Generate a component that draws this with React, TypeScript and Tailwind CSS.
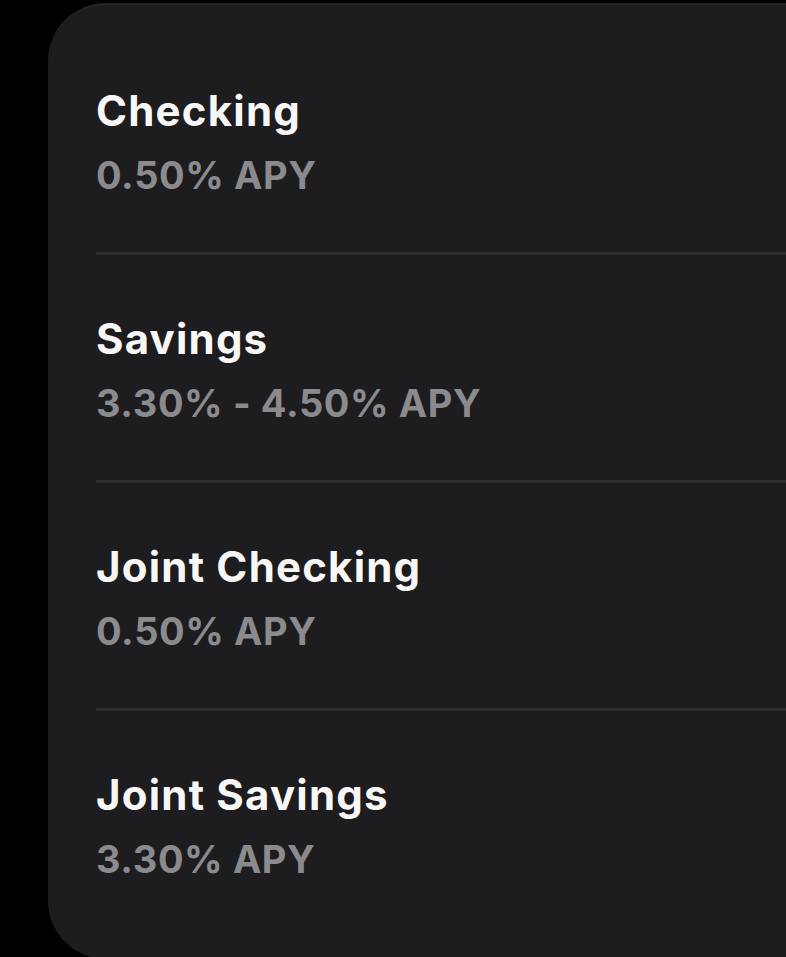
import React from "react";

type Account = {
  name: string;
  rate: string;
};

const accounts: Account[] = [
  { name: "Checking", rate: "0.50% APY" },
  { name: "Savings", rate: "3.30% - 4.50% APY" },
  { name: "Joint Checking", rate: "0.50% APY" },
  { name: "Joint Savings", rate: "3.30% APY" },
];

const AccountRow = ({ item, last }: { item: Account; last: boolean }) => {
  return (
    <div className="flex flex-col">
      <div className="flex flex-col pt-[60px] pb-[53px]">
        <h2 className="text-[42px] leading-[48px] font-bold tracking-[1.2px] text-[#f8f7f5]">
          {item.name}
        </h2>
        <p className="mt-[16px] text-[38px] leading-[48px] font-bold tracking-[0.6px] text-[#8b8a8c]">
          {item.rate}
        </p>
      </div>
      {!last && <div className="h-[3px] bg-[#2d2c2e]" />}
    </div>
  );
};

const App = () => {
  return (
    <div
      className="h-[957px] w-full overflow-hidden bg-black pt-[3px] pl-[48px]"
      style={{ fontFamily: "Inter, 'Noto Sans', sans-serif" }}
    >
      <div className="h-[956px] rounded-l-[58px] border-t-2 border-[#252426] bg-[#1d1c1e] pt-[22px] pl-[48px]">
        {accounts.map((item, i) => (
          <AccountRow key={i} item={item} last={i === accounts.length - 1} />
        ))}
      </div>
    </div>
  );
};

export default App;
